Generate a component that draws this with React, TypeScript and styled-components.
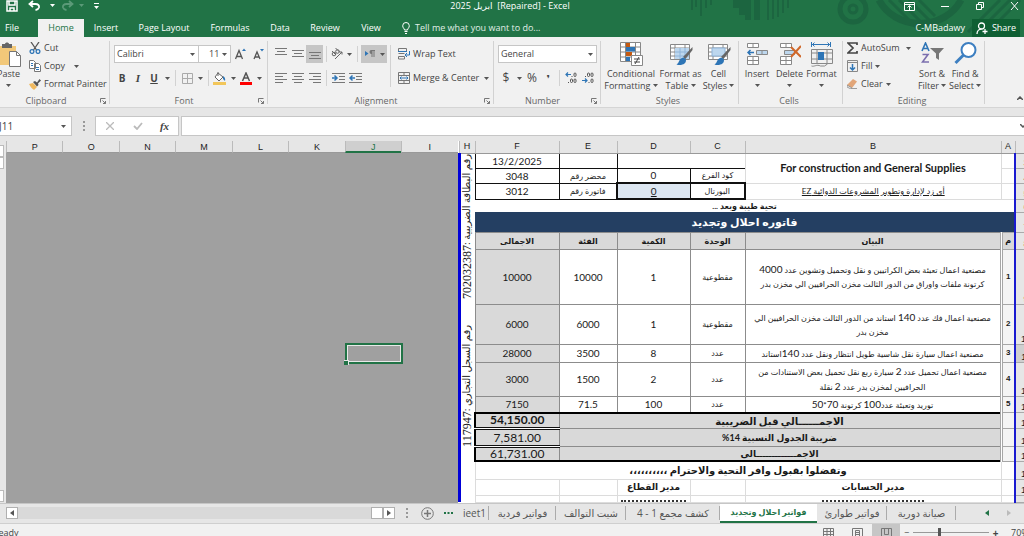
import React from "react";
import styled, { createGlobalStyle, css } from "styled-components";

const GlobalStyle = createGlobalStyle`
  * { box-sizing: border-box; }
  body { margin: 0; background: #e6e6e6; }
  button, input, select { font: inherit; color: inherit; margin: 0; }
`;

const green = "#217346";
const ui = `"Open Sans", "DejaVu Sans", sans-serif`;
const cellFont = `Lato, "DejaVu Sans", sans-serif`;

/* ---------- window ---------- */

const Viewport = styled.div`
  height: 100vh;
  overflow: hidden;
`;

/* The window is slightly larger than the screen, so its edges are cut off. */
const Shell = styled.div`
  margin: -8px -12px 0 -8px;
  font: 9px/12px ${ui};
  color: #444;
`;

const Banner = styled.header`
  position: relative;
  background: ${green};
  color: #fff;
`;

const Decor = styled.svg`
  position: absolute;
  top: 8px;
  right: 12px;
`;

const TitleBar = styled.div`
  position: relative;
  display: grid;
  grid-template-columns: 1fr auto 1fr;
  align-items: center;
  height: 27px;
  padding: 0 4px 0 0;
`;

const QuickAccess = styled.div`
  display: flex;
  align-items: center;
  padding-left: 14px;
`;

const WindowTitle = styled.span`
  padding-right: 4px;
`;

const WindowButtons = styled.div`
  display: flex;
  justify-content: flex-end;
`;

const PlainButton = styled.button<{ $w?: number; $active?: boolean }>`
  display: flex;
  align-items: center;
  justify-content: center;
  flex: 0 0 auto;
  width: ${(p) => (p.$w ? p.$w + "px" : "auto")};
  height: 18px;
  padding: 0;
  border: 0;
  background: ${(p) => (p.$active ? "#c6c6c6" : "transparent")};
  white-space: nowrap;
`;

const Tabs = styled.nav`
  position: relative;
  display: flex;
  height: 18px;
  padding-right: 16px;
`;

const RibbonTab = styled.button<{ $w: number; $active?: boolean }>`
  width: ${(p) => p.$w}px;
  padding: 0;
  border: 0;
  background: ${(p) => (p.$active ? "#f1f1f1" : "transparent")};
  color: ${(p) => (p.$active ? green : "#fff")};
  white-space: nowrap;
  &:first-child { margin-right: 6px; }
`;

const TellMe = styled.button`
  display: flex;
  align-items: center;
  gap: 5px;
  padding: 0 0 0 10px;
  border: 0;
  background: none;
  color: #e0eee6;
`;

const Account = styled.button`
  margin-left: auto;
  padding: 0 7px;
  border: 0;
  background: none;
`;

const Share = styled.button`
  display: flex;
  align-items: center;
  justify-content: center;
  gap: 4px;
  width: 48px;
  padding: 0;
  border: 0;
  background: #0f5f33;
`;

/* ---------- ribbon ---------- */

const Ribbon = styled.div`
  display: flex;
  height: 71px;
  background: #f1f1f1;
  border-bottom: 1px solid #d5d5d5;
`;

const GroupBox = styled.section<{ $w?: number }>`
  position: relative;
  display: flex;
  flex-direction: column;
  flex: ${(p) => (p.$w ? `0 0 ${p.$w}px` : "1 1 0")};
  &::after {
    content: "";
    position: absolute;
    top: 4px;
    right: 0;
    bottom: 3px;
    width: ${(p) => (p.$w ? 1 : 0)}px;
    background: #d2d2d2;
  }
`;

const LastGroup = styled(GroupBox)`
  align-items: flex-end;
  justify-content: flex-end;
  padding: 0 12px 0 0;
`;

const GroupBody = styled.div`
  display: flex;
  height: 58px;
`;

const GroupFoot = styled.div`
  display: flex;
  align-items: center;
  height: 12px;
  padding: 0 4px 0 0;
  color: #666;
`;

const GroupName = styled.span`
  flex: 1;
  text-align: center;
`;

const Rows = styled.div<{ $tight?: boolean }>`
  display: flex;
  flex-direction: column;
  gap: ${(p) => (p.$tight ? 0 : 6)}px;
  padding: ${(p) => (p.$tight ? 2 : 8)}px 0 0 4px;
`;

const Row = styled.div`
  display: flex;
  align-items: center;
  height: 18px;
`;

const Sep = styled.span`
  flex: 0 0 7px;
  height: 16px;
  background: linear-gradient(#d2d2d2, #d2d2d2) center / 1px 100% no-repeat;
`;

const TallSep = styled(Sep)`
  height: 42px;
  margin-top: 8px;
`;

const TextTool = styled.button`
  display: flex;
  align-items: center;
  gap: 3px;
  height: 18px;
  padding: 0;
  border: 0;
  background: none;
  white-space: nowrap;
`;

const BigTool = styled.button<{ $w: number }>`
  display: flex;
  flex: 0 0 ${(p) => p.$w}px;
  flex-direction: column;
  align-items: center;
  width: ${(p) => p.$w}px;
  padding: 5px 0 0;
  border: 0;
  background: none;
  white-space: nowrap;
  svg { flex: none; }
`;

const BigIcon = styled.span`
  display: flex;
  height: 26px;
`;

const SelectBox = styled.span<{ $w: number; $indent?: number }>`
  position: relative;
  display: flex;
  align-items: center;
  width: ${(p) => p.$w}px;
  height: 18px;
  background: #fff;
  border: 1px solid #c6c6c6;
  & + & { margin-left: -1px; }
  svg { position: absolute; right: 3px; pointer-events: none; }
  select {
    appearance: none;
    width: 100%;
    height: 16px;
    padding: 0 0 0 ${(p) => p.$indent || 2}px;
    border: 0;
    background: transparent;
  }
`;

const Glyph = styled.span<{ $kind?: "bold" | "italic" | "underline" | "big" }>`
  ${(p) => p.$kind === "bold" && css`font-weight: 700; font-size: 10px;`}
  ${(p) => p.$kind === "italic" && css`font: italic 700 11px "Liberation Serif", serif;`}
  ${(p) => p.$kind === "underline" && css`font-weight: 700; font-size: 10px; text-decoration: underline;`}
  ${(p) => p.$kind === "big" && css`font-size: 12px;`}
`;

/* ---------- formula bar ---------- */

const FormulaBar = styled.div`
  display: flex;
  height: 33px;
  padding: 8px 0 5px;
  background: #e6e6e6;
`;

const NameBox = styled.div`
  display: flex;
  align-items: center;
  width: 80px;
  background: #fff;
  border: 1px solid #c6c6c6;
  input {
    width: 65px;
    padding: 0 0 0 6px;
    border: 0;
    background: none;
    font-size: 10px;
  }
`;

const Grip = styled.span`
  flex: 0 0 23px;
  align-self: center;
  height: 10px;
  background: radial-gradient(#999 1px, transparent 1px) center / 4px 4px repeat-y;
`;

const FormulaButtons = styled.div`
  display: flex;
  align-items: center;
  width: 84px;
  margin-right: 2px;
  background: #fff;
  border: 1px solid #c6c6c6;
`;

const FormulaInput = styled.input`
  flex: 1;
  min-width: 0;
  border: 1px solid #c6c6c6;
  border-right: 0;
  background: #fff;
`;

const Expand = styled(PlainButton)`
  align-self: stretch;
  height: auto;
  background: #fff;
  border: solid #c6c6c6;
  border-width: 1px 0;
  margin-right: 8px;
`;

/* ---------- sheet ---------- */

const Sheet = styled.main`
  display: flex;
  background: #e6e6e6;
`;

const VScroll = styled.div`
  display: flex;
  flex-direction: column;
  justify-content: space-between;
  width: 14px;
  padding: 4px 2px 1px 0;
  span { height: 12px; background: #fff; border: 1px solid #bbb; }
  div { display: flex; flex-direction: column; }
`;

const Outside = styled.div`
  display: flex;
  flex-direction: column;
  flex: 1;
  min-width: 0;
`;

const Letters = styled.div`
  display: flex;
  height: 12px;
`;

const Letter = styled.span<{ $on?: boolean }>`
  flex: 1 1 0;
  border-left: 1px solid #bbb;
  text-align: center;
  font: 9px/13px "Liberation Sans", sans-serif;
  color: ${(p) => (p.$on ? green : "#222")};
  background: ${(p) => (p.$on ? "#cfcfcf" : "transparent")};
  border-bottom: ${(p) => (p.$on ? `2px solid ${green}` : "1px solid #999")};
`;

const Empty = styled.div`
  display: grid;
  flex: 1;
  grid-template-columns: repeat(8, 1fr);
  grid-template-rows: 190px 21px 1fr;
  background: #a0a0a0;
`;

const Selected = styled.div`
  position: relative;
  grid-area: 2 / 7;
  margin: 0 -2px 0 0;
  border: 2px solid ${green};
  box-shadow: inset 0 0 0 1px #e8e8e8;
  &::after {
    content: "";
    position: absolute;
    left: -3px;
    bottom: -3px;
    width: 4px;
    height: 4px;
    background: ${green};
    border: solid #e8e8e8;
    border-width: 1px 1px 0 0;
  }
`;

const Grid = styled.table`
  flex: none;
  width: 577px;
  table-layout: fixed;
  border-collapse: collapse;
  font: 9px/12px ${cellFont};
  color: #1a1a1a;
  background: #fff;
  td, th { padding: 0; text-align: center; vertical-align: middle; overflow: hidden; }
`;

const HeadRow = styled.tr`
  height: 12px;
  background: #e6e6e6;
  th {
    border-left: 1px solid #bbb;
    border-bottom: 1px solid #999;
    font: 9px/11px "Liberation Sans", sans-serif;
    color: #222;
  }
`;

const Tr = styled.tr<{ $h: number }>`
  height: ${(p) => p.$h}px;
`;

type Edge = "light" | "black" | "gray" | "none";
const edges: Record<Edge, string> = {
  light: "1px solid #dcdcdc",
  black: "1px solid #111",
  gray: "1px solid #8c8c8c",
  none: "0",
};

const Cell = styled.td<{ $edge?: Edge; $fill?: string; $bold?: boolean; $size?: number }>`
  border: ${(p) => edges[p.$edge || "gray"]};
  background: ${(p) => p.$fill || "#fff"};
  font-weight: ${(p) => (p.$bold ? 700 : 400)};
  font-size: ${(p) => p.$size || 8}px;
`;

const Serial = styled.td<{ $fill?: string }>`
  border: 1px solid #a6a6a6;
  border-left: 3px double #a6a6a6;
  background: ${(p) => p.$fill || "#f4f4f4"};
  font: 700 8px/12px "Liberation Sans", "DejaVu Sans", sans-serif;
`;

const Boxed = styled(Cell)<{ $end?: boolean }>`
  && {
    border-top: 2px solid #111;
    border-bottom: 2px solid #111;
    ${(p) => (p.$end ? "border-left: 2px solid #111;" : "border-right: 2px solid #111;")}
  }
`;

const Description = styled(Cell)`
  line-height: 14px;
  white-space: nowrap;
`;

const Digits = styled.span`
  font-size: 10px;
`;

const Band = styled(Cell)`
  background: #243f62;
  color: #fff;
  line-height: 18px;
`;

const Sum = styled(Cell)`
  line-height: 12px;
  && {
    border-left: 2px solid #000;
    border-bottom: 3px double #111;
  }
`;

const TotalRow = styled(Tr)<{ $pos?: "first" | "last" }>`
  && > td.box { border-top: ${(p) => (p.$pos === "first" ? "2px solid #000" : "")}; }
  && > td.box { border-bottom: ${(p) => (p.$pos === "last" ? "2px solid #000" : "")}; }
`;

const TotalLabel = styled(Cell)`
  line-height: 12px;
  && { border-right: 2px solid #000; }
`;

const RowNumber = styled.th<{ $on?: boolean }>`
  && { vertical-align: bottom; }
  border-left: 2px solid #1a1ad0;
  border-bottom: 1px solid #aaa;
  background: ${(p) => (p.$on ? "#cfcfcf" : "#e6e6e6")};
  font: 9px/10px "Liberation Sans", sans-serif;
`;

const SideCell = styled.td`
  border-left: 3px solid #0000d8;
  background: #fff;
  && { vertical-align: top; }
`;

const SideStack = styled.div`
  display: flex;
  flex-direction: column;
  align-items: center;
  gap: 27px;
`;

const SideText = styled.div`
  writing-mode: vertical-rl;
  transform: rotate(180deg);
  white-space: nowrap;
  font: 10px/12px "Liberation Serif", "DejaVu Sans", serif;
  span { font-size: 12px; }
`;

const Dots = styled.div<{ $w: number }>`
  width: ${(p) => p.$w}%;
  height: 2px;
  margin: 4px auto 0;
  border-bottom: 2px dotted #333;
`;

/* ---------- sheet tabs, status ---------- */

const SheetBar = styled.nav`
  display: flex;
  align-items: center;
  height: 21px;
  padding-left: 14px;
  background: #e6e6e6;
  border-top: 1px solid #c6c6c6;
  border-bottom: 1px solid #cfcfcf;
`;

const HScroll = styled.div`
  display: flex;
  flex: 1;
  height: 12px;
  background: #d9d9d9;
`;

const ScrollButton = styled.button`
  display: flex;
  align-items: center;
  justify-content: center;
  width: 12px;
  padding: 0;
  border: 1px solid #b0b0b0;
  background: #fff;
`;

const ScrollTrack = styled.span`
  flex: 1;
`;

const SheetTab = styled.button<{ $w: number; $active?: boolean }>`
  align-self: stretch;
  width: ${(p) => p.$w}px;
  padding: 0;
  overflow: hidden;
  white-space: nowrap;
  border: 0;
  font-size: 10px;
  ${(p) =>
    p.$active
      ? css`
          background: #fff;
          color: ${green};
          font-size: 8px;
          font-weight: 700;
          border-bottom: 2px solid ${green};
        `
      : css`
          color: #555;
          background: linear-gradient(#ababab, #ababab) right center / 1px 14px no-repeat;
        `}
`;

const SheetArrows = styled.div`
  display: flex;
  width: 80px;
  padding-left: 22px;
`;

const Status = styled.footer`
  display: flex;
  align-items: center;
  height: 18px;
  padding-left: 1px;
  background: #f1f1f1;
`;

const Ready = styled.span`
  flex: 1;
`;

const Zoom = styled.input`
  appearance: none;
  width: 76px;
  height: 10px;
  background: linear-gradient(#999, #999) center / 100% 1px no-repeat;
  &::-webkit-slider-thumb {
    appearance: none;
    width: 3px;
    height: 9px;
    background: #555;
  }
`;

const Percent = styled.span`
  width: 34px;
  padding-left: 9px;
`;

/* ---------- icons ---------- */

const Caret = ({ c = "#555" }: { c?: string }) => (
  <svg width="5" height="3" viewBox="0 0 5 3"><path d="M0 0h5L2.500 3z" fill={c} /></svg>
);

const Launcher = () => (
  <svg width="6" height="6" viewBox="0 0 6 6" fill="none" stroke="#777"><path d="M.5 4.500V.5h5M2.500 2.500l3 3M5.500 3v2.500H3" /></svg>
);

const lineSets: Record<string, number[][]> = {
  top: [[0, 12, 1], [2, 10, 4], [0, 12, 7]],
  middle: [[0, 12, 3], [2, 10, 6], [0, 12, 9]],
  bottom: [[0, 12, 5], [2, 10, 8], [0, 12, 11]],
  left: [[0, 12, 2], [0, 8, 5], [0, 12, 8], [0, 8, 11]],
  center: [[0, 12, 2], [2, 10, 5], [0, 12, 8], [2, 10, 11]],
  right: [[0, 12, 2], [4, 12, 5], [0, 12, 8], [4, 12, 11]],
};

const Lines = ({ kind }: { kind: string }) => (
  <svg width="12" height="13" viewBox="0 0 12 13" stroke="#777">
    {lineSets[kind].map(([a, b, y]) => <path key={y} d={`M${a} ${y - 0.5}H${b}`} />)}
  </svg>
);

const Indent = ({ flip }: { flip?: boolean }) => (
  <svg width="13" height="12" viewBox="0 0 13 12" fill="none">
    <path d="M0 1.500h13M7 4.500h6M7 7.500h6M0 10.500h13" stroke="#777" />
    <path d={flip ? "M6 6H1M3.500 3.500L1 6l2.500 2.500" : "M0 6h5M2.500 3.500L5 6 2.500 8.500"} stroke="#2e75b6" strokeWidth="1.500" />
  </svg>
);

const SaveIcon = () => (
  <svg width="12" height="12" viewBox="0 0 12 12" fill="none" stroke="#fff" strokeWidth="1.500"><path d="M1 1h10v10H1zM3 1v4h6V1M4 11V8h4v3" /></svg>
);
const UndoIcon = ({ flip }: { flip?: boolean }) => (
  <svg width="13" height="11" viewBox="0 0 13 11" fill="none" stroke={flip ? "#5b9a78" : "#fff"} strokeWidth="1.800">
    <g transform={flip ? "matrix(-1 0 0 1 13 0)" : undefined}><path d="M5 1L1.500 4 5 7M2 4h5.500c2.500 0 4 1.500 3.500 3.500C10.500 9 9 9.800 7.500 10" /></g>
  </svg>
);
const PasteIcon = () => (
  <svg width="24" height="25" viewBox="0 0 24 25">
    <path d="M1 4h18v19H1z" fill="#f2c879" />
    <path d="M5 2h3c0-2 4-2 4 0h3v4H5z" fill="#666" />
    <path d="M12.500 9.500h7l4 4v11h-11z" fill="#fff" stroke="#777" />
    <path d="M19.500 9.500v4h4" fill="none" stroke="#777" />
  </svg>
);
const CutIcon = () => (
  <svg width="12" height="12" viewBox="0 0 12 12" fill="none" strokeWidth="1.300">
    <path d="M2 0l5.500 8M10 0L4.500 8" stroke="#555" />
    <circle cx="3" cy="9.500" r="1.900" stroke="#2e75b6" /><circle cx="9" cy="9.500" r="1.900" stroke="#2e75b6" />
  </svg>
);
const CopyIcon = () => (
  <svg width="12" height="12" viewBox="0 0 12 12" fill="#fff" stroke="#777">
    <path d="M.5.500h4l2 2v6h-6zM5.500 3.500h4l2 2v6h-6z" />
    <path d="M2 3.500h2M2 5.500h2M7 7.500h3M7 9.500h3" stroke="#2e75b6" />
  </svg>
);
const PainterIcon = () => (
  <svg width="12" height="11" viewBox="0 0 12 11">
    <path d="M0 5l4-1 4 4-3 3c-1-1-3-2-5-6z" fill="#f0b95f" />
    <path d="M4 3l2-1 2 1.500L10.500 0 12 1.500 9 4.500 9.500 6 8 7.500z" fill="#555" />
  </svg>
);
const BordersIcon = () => (
  <svg width="11" height="11" viewBox="0 0 11 11" fill="none" stroke="#aaa"><path d="M.5.500h10v10H.5zM5.500.500v10M.5 5.500h10" /></svg>
);
const FillColor = () => (
  <svg width="14" height="13" viewBox="0 0 14 13">
    <path d="M5 1l5 4-4 4-4-4zM5 0v4" fill="#fff" stroke="#666" />
    <path d="M10 4c2 1 2.500 3 2 5l-2-2z" fill="#2e75b6" />
    <path d="M0 10h13v3H0z" fill="#f2c65a" />
  </svg>
);
const FontColor = () => (
  <svg width="12" height="13" viewBox="0 0 12 13">
    <path d="M2.500 9L6 1l3.500 8M4 6h4" fill="none" stroke="#555" strokeWidth="1.500" />
    <path d="M0 10h12v3H0z" fill="#f00" />
  </svg>
);
const GrowFont = ({ down }: { down?: boolean }) => (
  <svg width="12" height="12" viewBox="0 0 12 12">
    <path d={down ? "M1 11l3-7 3 7M2 9h4" : "M.5 11L4 2.500 7.500 11M1.500 8.500h5"} fill="none" stroke="#555" strokeWidth="1.300" />
    <path d={down ? "M7 1h4L9 3.500z" : "M7 3h4L9 .5z"} fill="#2e75b6" />
  </svg>
);
const RotateIcon = () => (
  <svg width="13" height="12" viewBox="0 0 13 12" fill="none" stroke="#666">
    <circle cx="3" cy="6" r="1.800" /><circle cx="6.500" cy="3.500" r="1.800" /><path d="M1 3l4 4M4.500 0l4 4M4 11l7-7M8.500 4H11v2.500" />
  </svg>
);
const RtlIcon = () => (
  <svg width="10" height="8" viewBox="0 0 10 8"><path d="M0 1l3.500 2.500L0 6z" fill="#2e75b6" /><path d="M6 0h4v1H9.500v6h-1V1h-1v6h-1V4C4 4 4 0 6 0z" fill="#777" /></svg>
);
const WrapIcon = () => (
  <svg width="12" height="12" viewBox="0 0 12 12" fill="none">
    <path d="M.5 3V.5h8V3M.5 5.500h6M.5 8.500V11h6V8.500z" stroke="#777" /><path d="M0 3.500h9" stroke="#2e75b6" />
    <path d="M11.500 3v4H7M9 5L7 7l2 2" stroke="#2e75b6" />
  </svg>
);
const MergeIcon = () => (
  <svg width="12" height="12" viewBox="0 0 12 12" fill="none">
    <path d="M.5.500h11v11H.5zM.5 3.500h11M.5 8.500h11M6 .5v3M6 8.500v3" stroke="#777" /><path d="M2 6h8M3.500 4.500L2 6l1.500 1.500M8.500 4.500L10 6 8.500 7.500" stroke="#2e75b6" />
  </svg>
);
const DecimalIcon = ({ more }: { more?: boolean }) => (
  <svg width="13" height="12" viewBox="0 0 13 12" fill="none">
    <g stroke="#555"><rect x="9" y="1" width="2" height="3.500" rx="1" /><rect x="9" y="7" width="2" height="3.500" rx="1" />
      {more ? <rect x="5.500" y="7" width="2" height="3.500" rx="1" /> : <rect x="5.500" y="1" width="2" height="3.500" rx="1" />}
      <path d={more ? "M6.500 4.500h1M3 10.500h1" : "M3 4.500h1M6.500 10.500h1"} /></g>
    <path d={more ? "M6 2.500H.8M3 .5l-2 2 2 2" : "M0 8.500h5M3 6.500l2 2-2 2"} stroke="#2e75b6" strokeWidth="1.200" />
  </svg>
);
const ConditionalIcon = () => (
  <svg width="24" height="24" viewBox="0 0 24 24">
    <path d="M1.500.500h20v19h-20zM1.500 5h20M1.500 10h20M1.500 15h20M6.500.500v19M16.500.500v19" fill="#fff" stroke="#888" />
    <path d="M7 1h4v4H7zM7 10h6v4H7z" fill="#c55a11" /><path d="M7 5h9v4.500H7zM7 15h4v4H7z" fill="#2e75b6" />
    <path d="M12.500 13.500h11v10h-11z" fill="#fff" stroke="#888" /><path d="M15 17h6M15 20h6M20 15l-4 7" stroke="#444" />
  </svg>
);
const FormatTableIcon = ({ cell }: { cell?: boolean }) => (
  <svg width="24" height="24" viewBox="0 0 24 24">
    <path d="M1.500 2.500h19v15h-19zM1.500 6h19M1.500 10h19M1.500 14h19M6 2.500v15M16 2.500v15" fill="#fff" stroke="#888" />
    <path d={cell ? "M5 6h13v8H5z" : "M6 6h14v11H6z"} fill="#bdd7ee" stroke={cell ? "#8fb4d9" : "none"} />
    {!cell && <path d="M6 10h14M6 14h14M11 6v11M16 6v11" stroke="#8fb4d9" />}
    <path d="M23.500 5v3l-7 9-2.500-2z" fill="#666" />
    <path d="M15.500 16c2 1 2 4 0 5.500s-5 2-8 1c2-1 2-3 3.500-5s3-2 4.500-1.500z" fill="#2e75b6" />
  </svg>
);
const InsertIcon = ({ del }: { del?: boolean }) => (
  <svg width="22" height="24" viewBox="0 0 22 24" fill="none" stroke="#888">
    <path d="M1.500 1.500h11v4h-11zM7 1.500v4M1.500 14.500h11v8h-11zM1.500 18.500h11M7 14.500v8" fill="#fff" />
    <path d={del ? "M5.500 8.500h10v4h-10z" : "M10.500 8.500h11v4h-11zM16 8.500v4"} fill="#bdd7ee" />
    {del ? <path d="M12 5l10 10M22 4L12 15" stroke="#d0682a" strokeWidth="2" /> : <path d="M8 10.500H2M4.500 8L2 10.500 4.500 13" stroke="#2e75b6" strokeWidth="1.500" />}
  </svg>
);
const FormatIcon = () => (
  <svg width="24" height="25" viewBox="0 0 24 25" fill="none">
    <path d="M2 2.500h18M4.500.500l-2 2 2 2M17.500.500l2 2-2 2M1.500 0v5M20.500 0v5" stroke="#2e75b6" />
    <path d="M1.500 7.500h21v14h-21zM1.500 11h21M1.500 17h21M7 7.500v14M17 7.500v14M1.500 24c3 1 5-2 9 0h4l3-2" stroke="#888" />
    <path d="M8 10h6v8H8z" fill="#2e75b6" />
  </svg>
);
const SigmaIcon = () => (
  <svg width="11" height="12" viewBox="0 0 11 12" fill="none" stroke="#444" strokeWidth="1.700"><path d="M10 3V1H1l5 5-5 5h9V9" /></svg>
);
const FillIcon = () => (
  <svg width="11" height="12" viewBox="0 0 11 12" fill="none"><path d="M.5.500h10v11H.5zM.5 2.500h10" stroke="#888" /><path d="M5.500 4v6M3 7.500L5.500 10 8 7.500" stroke="#2e75b6" strokeWidth="1.500" /></svg>
);
const ClearIcon = () => (
  <svg width="11" height="10" viewBox="0 0 11 10"><path d="M6 0l4 2.500L5 9 0 6z" fill="#e2a679" /><path d="M0 6l5 3-1 1-4-2zM5 9.500h5" stroke="#888" fill="#eee" strokeWidth=".8" /></svg>
);
const SortIcon = () => (
  <svg width="23" height="22" viewBox="0 0 23 22" fill="none">
    <path d="M1 9l3.500-8L8 9M2.200 6.500h4.600" stroke="#2e75b6" strokeWidth="1.600" />
    <path d="M1.500 12.500H7L1.500 20H8" stroke="#7b6fae" strokeWidth="1.600" /><path d="M9 6h14l-5 5.500V18l-3-2v-4.500z" fill="#777" />
  </svg>
);
const FindIcon = () => (
  <svg width="23" height="23" viewBox="0 0 23 23" fill="none" stroke="#3d7fc1"><circle cx="14.500" cy="8" r="7" strokeWidth="2" fill="#fff" /><path d="M9.500 13L1.500 21" strokeWidth="3" /></svg>
);
const UserIcon = () => (
  <svg width="12" height="12" viewBox="0 0 12 12" fill="none" stroke="#fff" strokeWidth="1.300"><circle cx="5.500" cy="4" r="3" /><path d="M1 12c0-3 2-5 4.500-5M9 7v5M6.500 9.500h5" /></svg>
);
const BulbIcon = () => (
  <svg width="8" height="12" viewBox="0 0 8 12" fill="none" stroke="#fff"><path d="M2.500 8C2.500 6.500.700 6 .700 3.800a3.300 3.300 0 0 1 6.600 0C7.300 6 5.500 6.500 5.500 8zM2.500 9.500h3M3 11.500h2" /></svg>
);
const WindowIcon = ({ d }: { d: string }) => (
  <svg width="11" height="10" viewBox="0 0 11 10" fill="none" stroke="#fff"><path d={d} /></svg>
);
const ViewIcon = ({ d }: { d: string }) => (
  <svg width="11" height="10" viewBox="0 0 11 10" fill="none" stroke="#777"><path d={d} /></svg>
);
const Arrow = ({ c, flip }: { c: string; flip?: boolean }) => (
  <svg width="4" height="6" viewBox="0 0 4 6"><path d={flip ? "M0 0v6l4-3z" : "M4 0v6L0 3z"} fill={c} /></svg>
);

const BannerArt = () => (
  <Decor width="340" height="37" viewBox="684 0 340 37" fill="none" stroke="#1c6540">
    <path d="M692 0v10M696 0v7M701 0v16M706 0v8M711 0v5" strokeWidth="2" />
    <path d="M736 0v8M742 0v15M748 0v20M757 0v20" strokeWidth="6" />
    <path d="M768 0v20M773 0v19M778 0v17M783 0v13M788 0v8" strokeWidth="2" />
    <circle cx="853" cy="9" r="13" strokeWidth="5" /><circle cx="853" cy="9" r="4" strokeWidth="3" />
    <path d="M879 0a45 40 0 0 0 82 0" strokeWidth="7" />
    <path d="M889 0l30 30M899 0l26 26M909 0l22 22M919 0l16 16" strokeWidth="3" />
    <path d="M1000 0l-32 32M1010 0l-34 34M1020 0l-34 34" strokeWidth="3" />
  </Decor>
);

/* ---------- pieces ---------- */

const Group = ({ name, w, launcher, children }: { name: string; w?: number; launcher?: boolean; children?: React.ReactNode }) => (
  <GroupBox $w={w}>
    <GroupBody>{children}</GroupBody>
    <GroupFoot><GroupName>{name}</GroupName>{launcher && <Launcher />}</GroupFoot>
  </GroupBox>
);

const Drop = ({ w = 10 }: { w?: number }) => <PlainButton as="span" $w={w}><Caret /></PlainButton>;

const InlineBox = styled.span`
  display: inline-block;
  vertical-align: 2px;
  line-height: 0;
`;

const Big = ({ w, icon, a, b }: { w: number; icon: React.ReactNode; a: string; b?: string }) => (
  <BigTool $w={w}>
    <BigIcon>{icon}</BigIcon>
    <span>{a}</span>
    <span>{b} <InlineBox><Caret /></InlineBox></span>
  </BigTool>
);

/* Latin numerals are set a little larger than the Arabic around them. */
const withDigits = (text: string) =>
  text.split(/(\d+)/).map((part, i) => (i % 2 ? <Digits key={i}>{part}</Digits> : part));

const items = [
  { no: "1", row: "9", h: 55, lines: ["مصنعية اعمال تعبئة بعض الكراتيين و نقل وتحميل وتشوين عدد 4000", "كرتونة ملفات واوراق من الدور الثالث مخزن الحرافيين الي مخزن بدر"], unit: "مقطوعية", qty: "1", rate: "10000", total: "10000" },
  { no: "2", row: "10", h: 40, lines: ["مصنعية اعمال فك عدد 140 استاند من الدور الثالث مخزن الحرافيين الي", "مخزن بدر"], unit: "مقطوعية", qty: "1", rate: "6000", total: "6000" },
  { no: "3", row: "11", h: 18, lines: ["مصنعية اعمال سيارة نقل شاسية طويل انتظار ونقل عدد 140استاند"], unit: "عدد", qty: "8", rate: "3500", total: "28000" },
  { no: "4", row: "12", h: 34, lines: ["مصنعية اعمال تحميل عدد 2 سيارة ربع نقل تحميل بعض الاستنادات من", "الحرافيين لمخزن بدر عدد 2 نقلة"], unit: "عدد", qty: "2", rate: "1500", total: "3000" },
  { no: "5", row: "13", h: 15, lines: ["توريد وتعبئة عدد100 كرتونة 70*50"], unit: "عدد", qty: "100", rate: "71.5", total: "7150" },
];

const gray = "#d9d9d9";

const Num = ({ n, on }: { n: string; on?: boolean }) => <RowNumber scope="row" $on={on}>{n}</RowNumber>;

const Invoice = () => (
  <Grid dir="rtl">
    <colgroup>
      {[21, 14, 256, 55, 73, 58, 84, 16].map((w, i) => <col key={i} style={{ width: w }} />)}
    </colgroup>
    <thead>
      <HeadRow>
        <th><InlineBox><Arrow c="#bbb" flip /></InlineBox></th>
        {["A", "B", "C", "D", "E", "F", "H"].map((l) => <th key={l} scope="col">{l}</th>)}
      </HeadRow>
    </thead>
    <tbody>
      <Tr $h={15}>
        <Num n="3" />
        <Cell $edge="light" />
        <Cell $edge="light" rowSpan={2} $bold $size={11} dir="ltr">For construction and General Supplies</Cell>
        <Cell $edge="black" colSpan={2} />
        <Cell $edge="black" />
        <Cell $edge="black" $size={10}>13/2/2025</Cell>
        <SideCell rowSpan={17}>
          <SideStack>
            <SideText>رقم البطاقة الضريبية :<span>702032387</span></SideText>
            <SideText>رقم السجل التجاري :<span>117947</span></SideText>
          </SideStack>
        </SideCell>
      </Tr>
      <Tr $h={15}>
        <Num n="4" />
        <Cell $edge="light" />
        <Cell $edge="black">كود الفرع</Cell>
        <Cell $edge="black" $size={10}>0</Cell>
        <Cell $edge="black">محضر رقم</Cell>
        <Cell $edge="black" $size={10}>3048</Cell>
      </Tr>
      <Tr $h={16}>
        <Num n="5" />
        <Cell $edge="light" />
        <Cell $edge="light"><u>أى زد لإدارة وتطوير المشروعات الدوائية EZ</u></Cell>
        <Boxed $edge="black">البورتال</Boxed>
        <Boxed $end $edge="black" $size={10} $fill="#dce6f1"><u>0</u></Boxed>
        <Cell $edge="black">فاتورة رقم</Cell>
        <Cell $edge="black" $size={10}>3012</Cell>
      </Tr>
      <Tr $h={13}>
        <Num n="6" />
        <Cell $edge="none" colSpan={6} $bold>تحية طيبة وبعد ...</Cell>
      </Tr>
      <Tr $h={20}>
        <Num n="7" />
        <Band $edge="none" colSpan={6} $bold $size={11}>فاتوره احلال وتجديد</Band>
      </Tr>
      <Tr $h={17}>
        <Num n="8" />
        <Serial $fill={gray}>م</Serial>
        {["البيان", "الوحدة", "الكمية", "الفئة", "الاجمالى"].map((t) => <Cell as="th" scope="col" key={t} $fill={gray} $bold>{t}</Cell>)}
      </Tr>
      {items.map((it) => (
        <Tr key={it.no} $h={it.h}>
          <Num n={it.row} on={it.row === "11"} />
          <Serial>{it.no}</Serial>
          <Description>{it.lines.map((l) => <div key={l}>{withDigits(l)}</div>)}</Description>
          <Cell>{it.unit}</Cell>
          <Cell $size={10}>{it.qty}</Cell>
          <Cell $size={10}>{it.rate}</Cell>
          <Cell $size={10} $fill={gray}>{it.total}</Cell>
        </Tr>
      ))}
      <TotalRow $h={16} $pos="first">
        <Num n="14" />
        <Serial />
        <TotalLabel className="box" colSpan={4} $fill={gray} $bold $size={10}>الاجمــــــالي قبل الضريبية</TotalLabel>
        <Sum className="box" $fill={gray} $bold $size={12}>54,150.00</Sum>
      </TotalRow>
      <TotalRow $h={18}>
        <Num n="15" />
        <Serial />
        <TotalLabel className="box" colSpan={4} $fill={gray} $bold $size={9}>ضريبة الجدول النسبية 14%</TotalLabel>
        <Sum className="box" $fill={gray} $size={12}>7,581.00</Sum>
      </TotalRow>
      <TotalRow $h={14} $pos="last">
        <Num n="16" />
        <Serial />
        <TotalLabel className="box" colSpan={4} $fill={gray} $bold $size={9}>الاجمـــــــــــــالى</TotalLabel>
        <Sum className="box" $fill={gray} $size={12}>61,731.00</Sum>
      </TotalRow>
      <Tr $h={18}>
        <Num n="17" />
        <Cell $edge="light" />
        <Cell $edge="light" colSpan={5} $bold $size={10}>وتفضلوا بقبول وافر التحية والاحترام ،،،،،،،،،،</Cell>
      </Tr>
      <Tr $h={16}>
        <Num n="18" />
        <Cell $edge="light" />
        <Cell $edge="light" $bold $size={9}>مدير الحسابات</Cell>
        <Cell $edge="light" />
        <Cell $edge="light" $bold $size={9}>مدير القطاع</Cell>
        <Cell $edge="light" />
        <Cell $edge="light" />
      </Tr>
      <Tr $h={7}>
        <RowNumber />
        <Cell $edge="light" />
        <Cell $edge="light"><Dots $w={40} /></Cell>
        <Cell $edge="light" />
        <Cell $edge="light"><Dots $w={90} /></Cell>
        <Cell $edge="light" />
        <Cell $edge="light" />
      </Tr>
    </tbody>
  </Grid>
);

const ribbonTabs: [string, number][] = [["File", 40], ["Home", 46], ["Insert", 44], ["Page Layout", 72], ["Formulas", 60], ["Data", 40], ["Review", 50], ["View", 42]];

export default function App() {
  return (
    <Viewport>
      <GlobalStyle />
      <Shell>
        <Banner>
          <BannerArt />
          <TitleBar>
            <QuickAccess>
              <PlainButton $w={12} aria-label="Save"><SaveIcon /></PlainButton>
              <PlainButton $w={32} aria-label="Undo"><UndoIcon /></PlainButton>
              <PlainButton aria-label="Undo list"><Caret c="#fff" /></PlainButton>
              <PlainButton $w={24} aria-label="Redo"><UndoIcon flip /></PlainButton>
              <PlainButton aria-label="Redo list"><Caret c="#5b9a78" /></PlainButton>
              <PlainButton $w={24} aria-label="Customize"><svg width="5" height="6" viewBox="0 0 5 6" fill="#fff"><path d="M0 0h5v1H0zM0 3h5L2.500 6z" /></svg></PlainButton>
            </QuickAccess>
            <WindowTitle>ابريل 2025&nbsp; [Repaired] - Excel</WindowTitle>
            <WindowButtons>
              <PlainButton $w={35} aria-label="Ribbon options"><WindowIcon d="M.5 1.500h10v8H.5zM.5 3.500h10M5.500 9V5M3.500 6.500l2-2 2 2" /></PlainButton>
              <PlainButton $w={35} aria-label="Minimize"><WindowIcon d="M2 5.500h8" /></PlainButton>
              <PlainButton $w={35} aria-label="Restore"><WindowIcon d="M2.500 3.500h5v5h-5zM4.500 3V1.500h5v5H8" /></PlainButton>
              <PlainButton $w={35} aria-label="Close"><WindowIcon d="M2 1l7 8M9 1L2 9" /></PlainButton>
            </WindowButtons>
          </TitleBar>
          <Tabs>
            {ribbonTabs.map(([t, w]) => <RibbonTab key={t} $w={w} $active={t === "Home"}>{t}</RibbonTab>)}
            <TellMe><BulbIcon />Tell me what you want to do...</TellMe>
            <Account>C-MBadawy</Account>
            <Share><UserIcon />Share</Share>
          </Tabs>
        </Banner>

        <Ribbon>
          <Group name="Clipboard" w={118} launcher>
            <Big w={33} icon={<PasteIcon />} a="Paste" />
            <Rows $tight>
              <TextTool><CutIcon />Cut</TextTool>
              <TextTool><CopyIcon />Copy <Drop w={16} /></TextTool>
              <TextTool><PainterIcon />Format Painter</TextTool>
            </Rows>
          </Group>
          <Group name="Font" w={158} launcher>
            <Rows>
              <Row>
                <SelectBox $w={85}><select aria-label="Font"><option>Calibri</option></select><Caret /></SelectBox>
                <SelectBox $w={33} $indent={10}><select aria-label="Font size"><option>11</option></select><Caret /></SelectBox>
                <PlainButton $w={20} aria-label="Increase font size"><GrowFont /></PlainButton>
                <PlainButton $w={16} aria-label="Decrease font size"><GrowFont down /></PlainButton>
              </Row>
              <Row>
                <PlainButton $w={16}><Glyph $kind="bold">B</Glyph></PlainButton>
                <PlainButton $w={16}><Glyph $kind="italic">I</Glyph></PlainButton>
                <PlainButton $w={16}><Glyph $kind="underline">U</Glyph></PlainButton>
                <Drop />
                <Sep />
                <PlainButton $w={16} aria-label="Borders"><BordersIcon /></PlainButton>
                <Drop />
                <Sep />
                <PlainButton $w={16} aria-label="Fill colour"><FillColor /></PlainButton>
                <Drop />
                <PlainButton $w={16} aria-label="Font colour"><FontColor /></PlainButton>
                <Drop />
              </Row>
            </Rows>
          </Group>
          <Group name="Alignment" w={226} launcher>
            <Rows>
              <Row>
                <PlainButton $w={17} aria-label="Top"><Lines kind="top" /></PlainButton>
                <PlainButton $w={17} aria-label="Middle"><Lines kind="middle" /></PlainButton>
                <PlainButton $w={17} $active aria-label="Bottom"><Lines kind="bottom" /></PlainButton>
                <Sep />
                <PlainButton $w={14} aria-label="Orientation"><RotateIcon /></PlainButton>
                <Drop />
                <Sep />
                <PlainButton $w={17} $active aria-label="Direction"><RtlIcon /></PlainButton>
                <PlainButton $w={9} $active aria-label="Direction list"><Caret /></PlainButton>
              </Row>
              <Row>
                <PlainButton $w={17} aria-label="Left"><Lines kind="left" /></PlainButton>
                <PlainButton $w={17} aria-label="Center"><Lines kind="center" /></PlainButton>
                <PlainButton $w={17} aria-label="Right"><Lines kind="right" /></PlainButton>
                <Sep />
                <PlainButton $w={17} aria-label="Increase indent"><Indent /></PlainButton>
                <PlainButton $w={17} aria-label="Decrease indent"><Indent flip /></PlainButton>
              </Row>
            </Rows>
            <TallSep />
            <Rows>
              <TextTool><WrapIcon />Wrap Text</TextTool>
              <TextTool><MergeIcon />Merge &amp; Center <Drop w={9} /></TextTool>
            </Rows>
          </Group>
          <Group name="Number" w={107} launcher>
            <Rows>
              <SelectBox $w={99}><select aria-label="Number format"><option>General</option></select><Caret /></SelectBox>
              <Row>
                <PlainButton $w={16}><Glyph $kind="big">$</Glyph></PlainButton>
                <Drop />
                <PlainButton $w={16}><Glyph $kind="big">%</Glyph></PlainButton>
                <PlainButton $w={16}><Glyph $kind="bold">❜</Glyph></PlainButton>
                <Sep />
                <PlainButton $w={17} aria-label="Increase decimal"><DecimalIcon more /></PlainButton>
                <PlainButton $w={16} aria-label="Decrease decimal"><DecimalIcon /></PlainButton>
              </Row>
            </Rows>
          </Group>
          <Group name="Styles" w={138}>
            <Big w={60} icon={<ConditionalIcon />} a="Conditional" b="Formatting" />
            <Big w={39} icon={<FormatTableIcon />} a="Format as" b="Table" />
            <Big w={37} icon={<FormatTableIcon cell />} a="Cell" b="Styles" />
          </Group>
          <Group name="Cells" w={104}>
            <Big w={36} icon={<InsertIcon />} a="Insert" />
            <Big w={29} icon={<InsertIcon del />} a="Delete" />
            <Big w={35} icon={<FormatIcon />} a="Format" />
          </Group>
          <Group name="Editing" w={142}>
            <Rows $tight>
              <TextTool><SigmaIcon />AutoSum <Drop w={12} /></TextTool>
              <TextTool><FillIcon />Fill <Caret /></TextTool>
              <TextTool><ClearIcon />Clear <Caret /></TextTool>
            </Rows>
            <Big w={35} icon={<SortIcon />} a="Sort &amp;" b="Filter" />
            <Big w={31} icon={<FindIcon />} a="Find &amp;" b="Select" />
          </Group>
          <LastGroup>
            <PlainButton $w={9} aria-label="Collapse ribbon"><svg width="6" height="4" viewBox="0 0 6 4" fill="none" stroke="#555" strokeWidth="1.500"><path d="M0 4l3-3 3 3" /></svg></PlainButton>
          </LastGroup>
        </Ribbon>

        <FormulaBar>
          <NameBox><input aria-label="Name box" defaultValue="J11" /><Drop /></NameBox>
          <Grip />
          <FormulaButtons>
            <PlainButton $w={28} aria-label="Cancel"><svg width="8" height="8" viewBox="0 0 8 8" stroke="#bbb" strokeWidth="1.300"><path d="M0 0l8 8M8 0L0 8" /></svg></PlainButton>
            <PlainButton $w={27} aria-label="Enter"><svg width="10" height="8" viewBox="0 0 10 8" fill="none" stroke="#bbb" strokeWidth="1.800"><path d="M1 4l3 3 5-6" /></svg></PlainButton>
            <PlainButton $w={27}><Glyph $kind="italic">fx</Glyph></PlainButton>
          </FormulaButtons>
          <FormulaInput aria-label="Formula" />
          <Expand $w={10} aria-label="Expand"><svg width="6" height="4" viewBox="0 0 6 4" fill="none" stroke="#555" strokeWidth="1.500"><path d="M0 0l3 3 3-3" /></svg></Expand>
        </FormulaBar>

        <Sheet>
          <VScroll><div><span /><span /></div><span /></VScroll>
          <Outside>
            <Letters>{["P", "O", "N", "M", "L", "K", "J", "I"].map((l) => <Letter key={l} $on={l === "J"}>{l}</Letter>)}</Letters>
            <Empty><Selected /></Empty>
          </Outside>
          <Invoice />
        </Sheet>

        <SheetBar>
          <HScroll>
            <ScrollButton aria-label="Scroll left"><Arrow c="#555" /></ScrollButton>
            <ScrollTrack />
            <ScrollButton aria-label="Thumb" />
            <ScrollButton aria-label="Scroll right"><Arrow c="#555" flip /></ScrollButton>
          </HScroll>
          <Grip />
          <PlainButton $w={18} aria-label="New sheet"><svg width="13" height="13" viewBox="0 0 13 13" fill="none" stroke="#777"><circle cx="6.500" cy="6.500" r="5.800" /><path d="M6.500 3v7M3 6.500h7" strokeWidth="1.500" /></svg></PlainButton>
          <PlainButton $w={24} aria-label="More sheets"><svg width="9" height="2" viewBox="0 0 9 2" fill={green}><path d="M0 0h2v2H0zM3.500 0h2v2h-2zM7 0h2v2H7z" /></svg></PlainButton>
          <SheetTab $w={29}>ieet1</SheetTab>
          <SheetTab $w={67} dir="rtl">فواتير فردية</SheetTab>
          <SheetTab $w={70} dir="rtl">شيت التوالف</SheetTab>
          <SheetTab $w={94} dir="rtl">كشف مجمع 1 - 4</SheetTab>
          <SheetTab $w={97} $active dir="rtl">فواتير احلال وتجديد</SheetTab>
          <SheetTab $w={70} dir="rtl">فواتير طوارئ</SheetTab>
          <SheetTab $w={69} dir="rtl">صيانة دورية</SheetTab>
          <SheetArrows>
            <PlainButton $w={18} aria-label="Previous"><Arrow c={green} /></PlainButton>
            <PlainButton $w={26} aria-label="Next"><Arrow c="#bbb" flip /></PlainButton>
          </SheetArrows>
        </SheetBar>

        <Status>
          <Ready>Ready</Ready>
          <PlainButton $w={29} aria-label="Normal view"><ViewIcon d="M.5.500h10v9H.5zM.5 3.500h10M.5 6.500h10M4 .5v9M7.500.500v9" /></PlainButton>
          <PlainButton $w={29} aria-label="Page layout view"><ViewIcon d="M.5.500h10v9H.5zM3.500 2.500h4v7h-4zM4 4.500h3M4 6.500h3" /></PlainButton>
          <PlainButton $w={28} $active aria-label="Page break view"><ViewIcon d="M.5 9.500v-9h10v9M3.500 1v5.500h4V1" /></PlainButton>
          <PlainButton $w={13}>−</PlainButton>
          <Zoom type="range" min="0" max="100" defaultValue="34" aria-label="Zoom" />
          <PlainButton $w={13}><Glyph $kind="bold">+</Glyph></PlainButton>
          <Percent>70%</Percent>
        </Status>
      </Shell>
    </Viewport>
  );
}
